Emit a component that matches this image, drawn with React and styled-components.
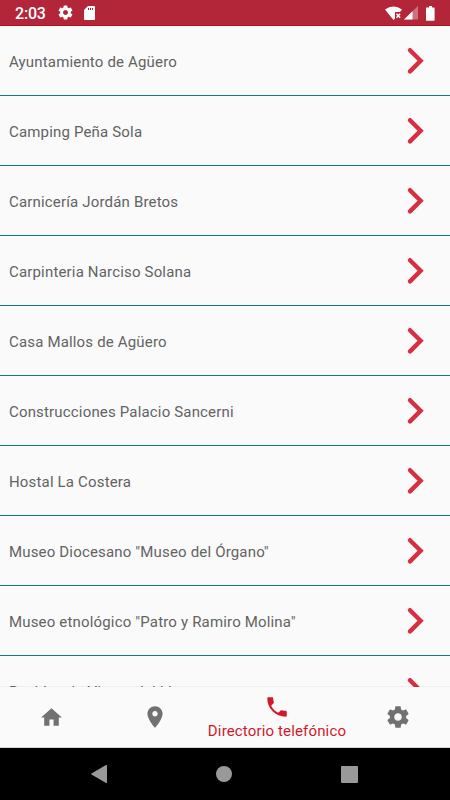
import React from 'react';
import styled, { createGlobalStyle } from 'styled-components';

const GlobalStyle = createGlobalStyle`
* {
    box-sizing: border-box;
}
body {
    margin: 0;
    font-family: Roboto, sans-serif;
}
`;

const Screen = styled.div`
width: 450px;
height: 800px;
display: flex;
flex-direction: column;
overflow: hidden;
background-color: #fafafa;
`;

const StatusBar = styled.header`
height: 26px;
flex: none;
display: flex;
align-items: center;
padding: 0 15px 0 15px;
color: white;
background-color: #b32639;
border-bottom: 1px solid #ad1019;
`;

const Clock = styled.span`
width: 42px;
font-size: 16px;
font-weight: 500;
letter-spacing: -0.2px;
line-height: 26px;
padding-top: 2px;
`;

const StatusIcon = styled.svg`
display: block;
flex: none;
fill: currentColor;
margin-left: ${props => props.$gap || 0}px;
`;

const StatusRight = styled.div`
display: flex;
align-items: center;
margin-left: auto;
padding-top: 1px;
`;

const Directory = styled.ul`
flex: 1;
min-height: 0;
margin: 0;
padding: 0;
list-style: none;
overflow: hidden;
`;

const DirectoryRow = styled.li`
height: 70px;
display: flex;
align-items: center;
justify-content: space-between;
padding: 1px 24px 0 9px;
border-bottom: 1px solid #147b80;
cursor: pointer;
`;

const PlaceName = styled.span`
font-size: 15px;
letter-spacing: 0.17px;
color: #636363;
padding-top: 2px;
`;

const Chevron = styled.svg`
display: block;
fill: none;
stroke: #d62f42;
stroke-width: 4.4;
stroke-linecap: round;
`;

const TabBar = styled.nav`
height: 61px;
flex: none;
display: flex;
box-shadow: 0 -1px 0 rgba(0, 0, 0, 0.04);
border-bottom: 1px solid #d4d4d4;
`;

const Tab = styled.button`
width: ${props => props.$width}px;
flex: none;
display: flex;
flex-direction: column;
align-items: center;
justify-content: center;
border: none;
padding: 0;
font-family: inherit;
color: ${props => props.$active ? '#d01a2b' : '#717171'};
background-color: inherit;
`;

const TabIcon = styled.svg`
display: block;
fill: currentColor;
`;

const TabLabel = styled.span`
font-size: 15px;
line-height: 18px;
letter-spacing: 0.15px;
margin-top: 2px;
white-space: nowrap;
`;

const NavBar = styled.footer`
height: 52px;
flex: none;
display: flex;
align-items: center;
justify-content: space-between;
padding: 0 92px 0 91px;
background-color: black;
`;

const NavIcon = styled.svg`
display: block;
fill: #999999;
`;

const gear = 'M19.43 12.98c.04-.32.07-.64.07-.98s-.03-.66-.07-.98l2.11-1.65c.19-.15.24-.42.12-.64l-2-3.46c-.12-.22-.39-.3-.61-.22l-2.49 1c-.52-.4-1.08-.73-1.69-.98l-.38-2.65C14.46 2.18 14.25 2 14 2h-4c-.25 0-.46.18-.49.42l-.38 2.65c-.61.25-1.17.59-1.69.98l-2.49-1c-.23-.09-.49 0-.61.22l-2 3.46c-.13.22-.07.49.12.64l2.11 1.65c-.04.32-.07.65-.07.98s.03.66.07.98l-2.11 1.65c-.19.15-.24.42-.12.64l2 3.46c.12.22.39.3.61.22l2.49-1c.52.4 1.08.73 1.69.98l.38 2.65c.03.24.24.42.49.42h4c.25 0 .46-.18.49-.42l.38-2.65c.61-.25 1.17-.59 1.69-.98l2.49 1c.23.09.49 0 .61-.22l2-3.46c.12-.22.07-.49-.12-.64l-2.11-1.65zM12 15.5c-1.93 0-3.5-1.57-3.5-3.5s1.57-3.5 3.5-3.5 3.5 1.57 3.5 3.5-1.57 3.5-3.5 3.5z';

const places = [
    'Ayuntamiento de Agüero',
    'Camping Peña Sola',
    'Carnicería Jordán Bretos',
    'Carpinteria Narciso Solana',
    'Casa Mallos de Agüero',
    'Construcciones Palacio Sancerni',
    'Hostal La Costera',
    'Museo Diocesano "Museo del Órgano"',
    'Museo etnológico "Patro y Ramiro Molina"',
    'Residencia Virgen del Llano',
];

const tabs = [
    { width: 103, size: 25, icon: 'M10 20v-6h4v6h5v-8h3L12 3 2 12h3v8z' },
    { width: 104, size: 26, icon: 'M12 2C8.13 2 5 5.13 5 9c0 5.25 7 13 7 13s7-7.75 7-13c0-3.87-3.13-7-7-7zm0 9.5c-1.38 0-2.5-1.12-2.5-2.5s1.12-2.5 2.5-2.5 2.5 1.12 2.5 2.5-1.12 2.5-2.5 2.5z' },
    { width: 140, size: 26, label: 'Directorio telefónico', icon: 'M6.62 10.79c1.44 2.83 3.76 5.14 6.59 6.59l2.2-2.2c.27-.27.67-.36 1.02-.24 1.12.37 2.33.57 3.57.57.55 0 1 .45 1 1V20c0 .55-.45 1-1 1-9.39 0-17-7.61-17-17 0-.55.45-1 1-1h3.5c.55 0 1 .45 1 1 0 1.25.2 2.45.57 3.57.11.35.03.74-.25 1.02l-2.2 2.2z' },
    { width: 102, size: 26, icon: gear },
];

function App() {

    return(
        <Screen>
            <GlobalStyle />
            <StatusBar>
                <Clock>2:03</Clock>
                <StatusIcon width="17" height="17" viewBox="0 0 24 24">
                    <path d={gear} />
                </StatusIcon>
                <StatusIcon $gap={10} width="11" height="14" viewBox="0 0 11 14">
                    <path fillRule="evenodd" d="M4 0h6q1 0 1 1v12q0 1-1 1H1q-1 0-1-1V4zM4 2v2h1V2zM6 2v2h1V2zM8 2v2h1V2z" />
                </StatusIcon>
                <StatusRight>
                    <StatusIcon width="18" height="15" viewBox="0 0 18 15">
                        <path d="M0 3.5Q8.5-2.5 17 3.5L15 6H10v6.5L8.5 14z" />
                        <path d="M11.5 7.8l3.6 4M15.1 7.8l-3.6 4" stroke="white" strokeWidth="1.5" />
                    </StatusIcon>
                    <StatusIcon $gap={1} width="14" height="14" viewBox="0 0 14 14">
                        <path opacity=".35" d="M14 0v13.5H0z" />
                        <path d="M8.5 5.3v8.2H0z" />
                    </StatusIcon>
                    <StatusIcon $gap={8} width="9" height="15" viewBox="0 0 9 15">
                        <path d="M3 0h3v1.5h2q.6 0 .6.6v12q0 .6-.6.6H.6q-.6 0-.6-.6v-12q0-.6.6-.6H3z" />
                    </StatusIcon>
                </StatusRight>
            </StatusBar>
            <Directory>
                {places.map(place => (
                    <DirectoryRow key={place}>
                        <PlaceName>{place}</PlaceName>
                        <Chevron width="20" height="28" viewBox="0 0 20 28">
                            <path d="M4 3.2l10.6 10.6L4 24.4" />
                        </Chevron>
                    </DirectoryRow>
                ))}
            </Directory>
            <TabBar>
                {tabs.map(tab => (
                    <Tab key={tab.icon} $width={tab.width} $active={!!tab.label}>
                        <TabIcon width={tab.size} height={tab.size} viewBox="0 0 24 24">
                            <path d={tab.icon} />
                        </TabIcon>
                        {tab.label && <TabLabel>{tab.label}</TabLabel>}
                    </Tab>
                ))}
            </TabBar>
            <NavBar>
                <NavIcon width="16" height="18" viewBox="0 0 16 18">
                    <path d="M15 0q1-.3 1 .8v16.4q0 1.1-1 .8L.5 9.6q-.8-.6 0-1.2z" />
                </NavIcon>
                <NavIcon width="16" height="16" viewBox="0 0 16 16">
                    <circle cx="8" cy="8" r="8" />
                </NavIcon>
                <NavIcon width="17" height="17" viewBox="0 0 17 17">
                    <rect width="17" height="17" rx="1" />
                </NavIcon>
            </NavBar>
        </Screen>
    );
}

export default App;
